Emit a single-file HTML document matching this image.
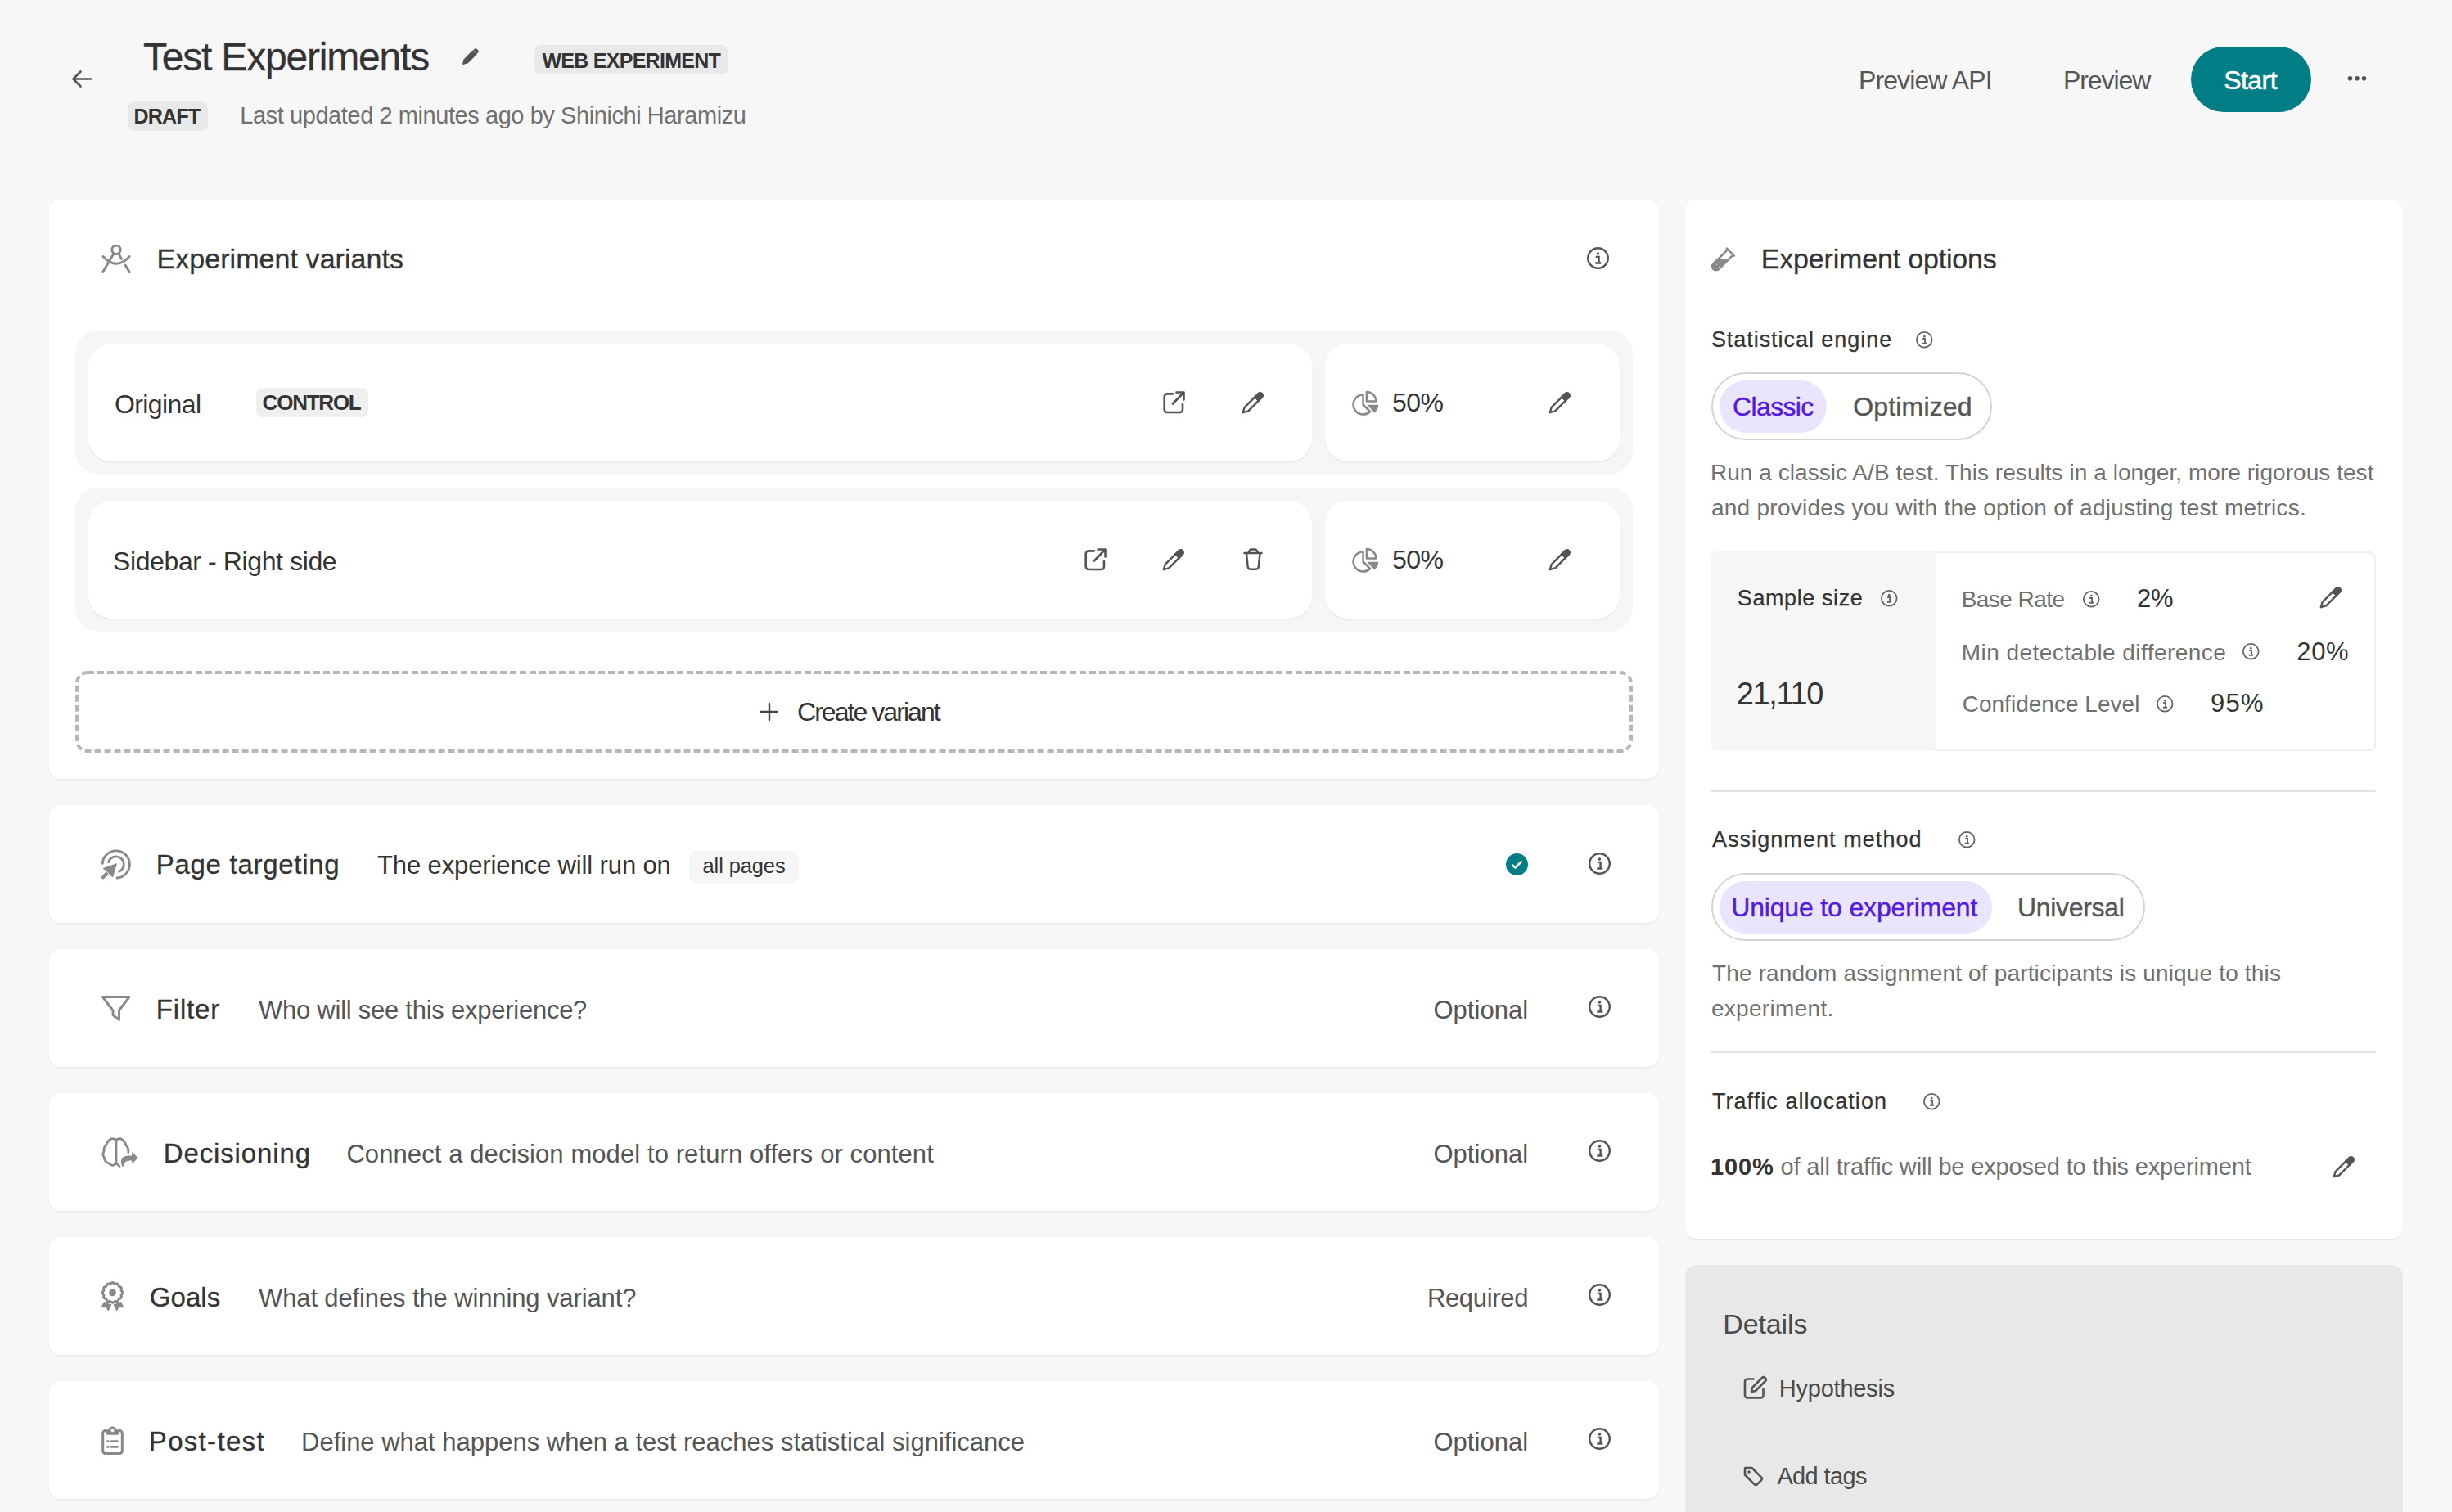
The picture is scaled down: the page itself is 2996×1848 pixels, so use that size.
<!DOCTYPE html>
<html><head><meta charset="utf-8"><title>Test Experiments</title>
<style>
html,body{margin:0;padding:0;background:#f7f7f7;}
body{width:2996px;height:1848px;overflow:hidden;background:#f7f7f7;position:relative;font-family:'Liberation Sans', sans-serif;}
.b{position:absolute;}
.t{position:absolute;white-space:nowrap;line-height:1;}
.i{position:absolute;overflow:visible;}
</style></head><body>
<div class="b" style="left:60px;top:244px;width:1967px;height:708px;background:#fff;border-radius:14px;box-shadow:0 1px 0 rgba(0,0,0,0.025), 0 2px 2px rgba(0,0,0,0.035);"></div>
<div class="b" style="left:92px;top:404px;width:1903px;height:176px;background:#f6f6f6;border-radius:28px;"></div>
<div class="b" style="left:108px;top:420px;width:1495px;height:144px;background:#fff;border-radius:28px;box-shadow:0 1.5px 2px rgba(0,0,0,0.05);"></div>
<div class="b" style="left:1619px;top:420px;width:360px;height:144px;background:#fff;border-radius:28px;box-shadow:0 1.5px 2px rgba(0,0,0,0.05);"></div>
<div class="b" style="left:92px;top:596px;width:1903px;height:176px;background:#f6f6f6;border-radius:28px;"></div>
<div class="b" style="left:108px;top:612px;width:1495px;height:144px;background:#fff;border-radius:28px;box-shadow:0 1.5px 2px rgba(0,0,0,0.05);"></div>
<div class="b" style="left:1619px;top:612px;width:360px;height:144px;background:#fff;border-radius:28px;box-shadow:0 1.5px 2px rgba(0,0,0,0.05);"></div>
<div class="b" style="left:313px;top:474px;width:137px;height:36px;background:#efefef;border-radius:8px;"></div>
<div class="b" style="left:60px;top:984px;width:1967px;height:144px;background:#fff;border-radius:14px;box-shadow:0 1px 0 rgba(0,0,0,0.025), 0 2px 2px rgba(0,0,0,0.035);"></div>
<div class="b" style="left:60px;top:1160px;width:1967px;height:144px;background:#fff;border-radius:14px;box-shadow:0 1px 0 rgba(0,0,0,0.025), 0 2px 2px rgba(0,0,0,0.035);"></div>
<div class="b" style="left:60px;top:1336px;width:1967px;height:144px;background:#fff;border-radius:14px;box-shadow:0 1px 0 rgba(0,0,0,0.025), 0 2px 2px rgba(0,0,0,0.035);"></div>
<div class="b" style="left:60px;top:1512px;width:1967px;height:144px;background:#fff;border-radius:14px;box-shadow:0 1px 0 rgba(0,0,0,0.025), 0 2px 2px rgba(0,0,0,0.035);"></div>
<div class="b" style="left:60px;top:1688px;width:1967px;height:144px;background:#fff;border-radius:14px;box-shadow:0 1px 0 rgba(0,0,0,0.025), 0 2px 2px rgba(0,0,0,0.035);"></div>
<div class="b" style="left:842px;top:1039px;width:134px;height:41px;background:#f6f6f6;border-radius:10px;box-shadow:0 1px 1px rgba(0,0,0,0.03);"></div>
<div class="b" style="left:653px;top:55px;width:237px;height:36px;background:#e9e9e9;border-radius:8px;"></div>
<div class="b" style="left:156px;top:124px;width:98px;height:36px;background:#e9e9e9;border-radius:8px;"></div>
<div class="b" style="left:2677px;top:57px;width:147px;height:80px;background:#007d85;border-radius:40px;"></div>
<div class="b" style="left:2059px;top:244px;width:877px;height:1270px;background:#fff;border-radius:14px;box-shadow:0 1px 0 rgba(0,0,0,0.025), 0 2px 2px rgba(0,0,0,0.035);"></div>
<div class="b" style="left:2091px;top:455px;width:343px;height:83px;background:#fff;border-radius:42px;border:2px solid #d4d4d4;box-sizing:border-box;"></div>
<div class="b" style="left:2101px;top:465px;width:131px;height:64px;background:#e8e5fd;border-radius:32px;"></div>
<div class="b" style="left:2091px;top:674px;width:812px;height:244px;background:#fff;border-radius:8px;border:2px solid #efefef;box-sizing:border-box;"></div>
<div class="b" style="left:2091px;top:674px;width:275px;height:244px;background:#f6f6f6;border-radius:7px;border-top-right-radius:0;border-bottom-right-radius:0;"></div>
<div class="b" style="left:2091px;top:966px;width:812px;height:2px;background:#e3e3e3;border-radius:0px;"></div>
<div class="b" style="left:2091px;top:1067px;width:530px;height:83px;background:#fff;border-radius:42px;border:2px solid #d4d4d4;box-sizing:border-box;"></div>
<div class="b" style="left:2101px;top:1076.5px;width:333px;height:64px;background:#e8e5fd;border-radius:32px;"></div>
<div class="b" style="left:2091px;top:1284.5px;width:812px;height:2px;background:#e3e3e3;border-radius:0px;"></div>
<div class="b" style="left:2059px;top:1546px;width:877px;height:400px;background:#e8e8e8;border-radius:14px;"></div>
<svg class="i" style="left:86px;top:84px" width="28" height="26" viewBox="0 0 28 26"><path d="M25 12.5 H4.5 M12.5 3.5 L3.5 12.5 L12.5 21.5" fill="none" stroke="#535457" stroke-width="2.7" stroke-linecap="round" stroke-linejoin="round"/></svg>
<svg class="i" style="left:563px;top:57px" width="24" height="24" viewBox="0 0 24 24"><path d="M2.5 21.5 L4 15.5 L15 4.5 L19.5 9 L8.5 20 Z" fill="#535457" stroke="#535457" stroke-width="1" stroke-linejoin="round"/><path d="M16.5 3 a2.4 2.4 0 0 1 3.4 0 l1.1 1.1 a2.4 2.4 0 0 1 0 3.4 l-1 1 l-4.5 -4.5 z" fill="#535457"/></svg>
<svg class="i" style="left:2866px;top:89px" width="30" height="14" viewBox="0 0 30 14"><circle cx="5.5" cy="6.8" r="2.8" fill="#535457"/><circle cx="14" cy="6.8" r="2.8" fill="#535457"/><circle cx="22.5" cy="6.8" r="2.8" fill="#535457"/></svg>
<svg class="i" style="left:110px;top:280px" width="60" height="60" viewBox="0 0 60 60"><g fill="none" stroke="#88898c" stroke-width="2.9" stroke-linecap="round"><circle cx="32" cy="25.3" r="5.2"/><path d="M29 30 L15.6 52.5 M35 30 L38.6 36.6 M43 44 L48.4 52.8"/><path d="M16 33.5 Q32 51 48.2 33.5"/></g></svg>
<svg class="i" style="left:1938.5px;top:301.5px" width="27" height="27" viewBox="0 0 27 27"><circle cx="13.5" cy="13.5" r="12.285" fill="none" stroke="#535457" stroke-width="2.4299999999999997"/><circle cx="13.5" cy="8.1" r="1.7550000000000001" fill="#535457"/><path d="M10.8 11.88 H14.580000000000002 V19.439999999999998 M10.26 19.439999999999998 H17.28" fill="none" stroke="#535457" stroke-width="2.4299999999999997"/></svg>
<svg class="i" style="left:1881px;top:455.0px" width="60" height="98.0" viewBox="0 0 60 98.0"><g transform="translate(12,50.0) rotate(-45) scale(1.0)"><path d="M1.2 0 L7 -3.2 H25 V3.2 H7 Z" fill="none" stroke="#535457" stroke-width="2.4" stroke-linejoin="round"/><path d="M24 -4.4 H30.6 a4.4 4.4 0 0 1 0 8.8 H24 Z" fill="#535457"/></g></svg>
<svg class="i" style="left:1640px;top:465px" width="50" height="50" viewBox="0 0 50 50"><path d="M25.5 17.5 V29.5 L34 38 A12 12 0 1 1 25.5 17.5 Z" fill="none" stroke="#88898c" stroke-width="2.5" stroke-linejoin="round"/><path d="M29.9 14.1 V25.5 H41.3 A11.4 11.4 0 0 0 29.9 14.1 Z" fill="none" stroke="#88898c" stroke-width="2.5" stroke-linejoin="round"/><path d="M30.2 29.8 H44.2 A14 14 0 0 1 39.5 39.6 Z" fill="#88898c"/></svg>
<svg class="i" style="left:1881px;top:647.0px" width="60" height="98.0" viewBox="0 0 60 98.0"><g transform="translate(12,50.0) rotate(-45) scale(1.0)"><path d="M1.2 0 L7 -3.2 H25 V3.2 H7 Z" fill="none" stroke="#535457" stroke-width="2.4" stroke-linejoin="round"/><path d="M24 -4.4 H30.6 a4.4 4.4 0 0 1 0 8.8 H24 Z" fill="#535457"/></g></svg>
<svg class="i" style="left:1640px;top:657px" width="50" height="50" viewBox="0 0 50 50"><path d="M25.5 17.5 V29.5 L34 38 A12 12 0 1 1 25.5 17.5 Z" fill="none" stroke="#88898c" stroke-width="2.5" stroke-linejoin="round"/><path d="M29.9 14.1 V25.5 H41.3 A11.4 11.4 0 0 0 29.9 14.1 Z" fill="none" stroke="#88898c" stroke-width="2.5" stroke-linejoin="round"/><path d="M30.2 29.8 H44.2 A14 14 0 0 1 39.5 39.6 Z" fill="#88898c"/></svg>
<svg class="i" style="left:1419px;top:476px" width="32" height="32" viewBox="0 0 32 32"><path d="M13.9 5.4 H7.2 a3.5 3.5 0 0 0 -3.5 3.5 V24.5 a3.5 3.5 0 0 0 3.5 3.5 H22.5 a3.5 3.5 0 0 0 3.5 -3.5 V18" fill="none" stroke="#535457" stroke-width="2.6" stroke-linecap="round"/><path d="M18.5 3.5 H27.5 V12.5 M27 4 L13.9 17.5" fill="none" stroke="#535457" stroke-width="2.6" stroke-linecap="round" stroke-linejoin="round"/></svg>
<svg class="i" style="left:1505.6px;top:454.8px" width="60" height="98.0" viewBox="0 0 60 98.0"><g transform="translate(12,50.0) rotate(-45) scale(1.0)"><path d="M1.2 0 L7 -3.2 H25 V3.2 H7 Z" fill="none" stroke="#535457" stroke-width="2.4" stroke-linejoin="round"/><path d="M24 -4.4 H30.6 a4.4 4.4 0 0 1 0 8.8 H24 Z" fill="#535457"/></g></svg>
<svg class="i" style="left:1323px;top:668px" width="32" height="32" viewBox="0 0 32 32"><path d="M13.9 5.4 H7.2 a3.5 3.5 0 0 0 -3.5 3.5 V24.5 a3.5 3.5 0 0 0 3.5 3.5 H22.5 a3.5 3.5 0 0 0 3.5 -3.5 V18" fill="none" stroke="#535457" stroke-width="2.6" stroke-linecap="round"/><path d="M18.5 3.5 H27.5 V12.5 M27 4 L13.9 17.5" fill="none" stroke="#535457" stroke-width="2.6" stroke-linecap="round" stroke-linejoin="round"/></svg>
<svg class="i" style="left:1409px;top:647.0px" width="60" height="98.0" viewBox="0 0 60 98.0"><g transform="translate(12,50.0) rotate(-45) scale(1.0)"><path d="M1.2 0 L7 -3.2 H25 V3.2 H7 Z" fill="none" stroke="#535457" stroke-width="2.4" stroke-linejoin="round"/><path d="M24 -4.4 H30.6 a4.4 4.4 0 0 1 0 8.8 H24 Z" fill="#535457"/></g></svg>
<svg class="i" style="left:1515px;top:661px" width="32" height="38" viewBox="0 0 32 38"><path d="M5.5 14.9 H26.5" stroke="#535457" stroke-width="2.5" stroke-linecap="round"/><path d="M10.5 14.6 L12.2 11.4 a1.5 1.5 0 0 1 1.3 -0.8 H19 a1.5 1.5 0 0 1 1.3 0.8 L22 14.6" fill="none" stroke="#535457" stroke-width="2.5" stroke-linejoin="round"/><path d="M8 15.5 L9.6 31.5 a3.5 3.5 0 0 0 3.5 3.2 H19.3 a3.5 3.5 0 0 0 3.5 -3.2 L24.5 15.5" fill="none" stroke="#535457" stroke-width="2.5" stroke-linejoin="round"/></svg>
<svg class="i" style="left:92px;top:820px" width="1903" height="100" viewBox="0 0 1903 100"><rect x="2" y="2" width="1899" height="96" rx="13" fill="none" stroke="#b7b7b7" stroke-width="4" stroke-dasharray="8 4"/></svg>
<svg class="i" style="left:928px;top:858px" width="24" height="24" viewBox="0 0 24 24"><path d="M12 2 V22 M2 12 H22" stroke="#444" stroke-width="2.4" stroke-linecap="round"/></svg>
<svg class="i" style="left:110px;top:1025px" width="70" height="65" viewBox="0 0 70 65"><g fill="none" stroke="#88898c" stroke-width="2.8"><path d="M15.2 31.4 A16.6 16.6 0 1 1 31.8 48"/><path d="M22.35 29.7 A9.6 9.6 0 1 1 34.3 40.7"/></g><path d="M16 47.2 L24.5 38.5" stroke="#88898c" stroke-width="4.2" stroke-linecap="round"/><path d="M32.4 30.8 L16.3 36.4 L21.5 40.2 L27.5 46.9 Z" fill="#88898c" stroke="#fff" stroke-width="2.2" stroke-linejoin="round" paint-order="stroke"/><path d="M32.4 30.8 L16.3 36.4 L21.5 40.2 L27.5 46.9 Z" fill="#88898c" stroke="#88898c" stroke-width="1" stroke-linejoin="round"/></svg>
<svg class="i" style="left:1839.5px;top:1042.5px" width="27" height="27" viewBox="0 0 27 27"><circle cx="13.5" cy="13.5" r="13.5" fill="#007d85"/><path d="M7.5 14 L11.5 17.5 L19.5 9.5" fill="none" stroke="#fff" stroke-width="2.6"/></svg>
<svg class="i" style="left:1941.0px;top:1041.5px" width="27" height="27" viewBox="0 0 27 27"><circle cx="13.5" cy="13.5" r="12.285" fill="none" stroke="#535457" stroke-width="2.4299999999999997"/><circle cx="13.5" cy="8.1" r="1.7550000000000001" fill="#535457"/><path d="M10.8 11.88 H14.580000000000002 V19.439999999999998 M10.26 19.439999999999998 H17.28" fill="none" stroke="#535457" stroke-width="2.4299999999999997"/></svg>
<svg class="i" style="left:1941.0px;top:1217.2px" width="27" height="27" viewBox="0 0 27 27"><circle cx="13.5" cy="13.5" r="12.285" fill="none" stroke="#535457" stroke-width="2.4299999999999997"/><circle cx="13.5" cy="8.1" r="1.7550000000000001" fill="#535457"/><path d="M10.8 11.88 H14.580000000000002 V19.439999999999998 M10.26 19.439999999999998 H17.28" fill="none" stroke="#535457" stroke-width="2.4299999999999997"/></svg>
<svg class="i" style="left:1941.0px;top:1393.2px" width="27" height="27" viewBox="0 0 27 27"><circle cx="13.5" cy="13.5" r="12.285" fill="none" stroke="#535457" stroke-width="2.4299999999999997"/><circle cx="13.5" cy="8.1" r="1.7550000000000001" fill="#535457"/><path d="M10.8 11.88 H14.580000000000002 V19.439999999999998 M10.26 19.439999999999998 H17.28" fill="none" stroke="#535457" stroke-width="2.4299999999999997"/></svg>
<svg class="i" style="left:1941.0px;top:1569.2px" width="27" height="27" viewBox="0 0 27 27"><circle cx="13.5" cy="13.5" r="12.285" fill="none" stroke="#535457" stroke-width="2.4299999999999997"/><circle cx="13.5" cy="8.1" r="1.7550000000000001" fill="#535457"/><path d="M10.8 11.88 H14.580000000000002 V19.439999999999998 M10.26 19.439999999999998 H17.28" fill="none" stroke="#535457" stroke-width="2.4299999999999997"/></svg>
<svg class="i" style="left:1941.0px;top:1745.2px" width="27" height="27" viewBox="0 0 27 27"><circle cx="13.5" cy="13.5" r="12.285" fill="none" stroke="#535457" stroke-width="2.4299999999999997"/><circle cx="13.5" cy="8.1" r="1.7550000000000001" fill="#535457"/><path d="M10.8 11.88 H14.580000000000002 V19.439999999999998 M10.26 19.439999999999998 H17.28" fill="none" stroke="#535457" stroke-width="2.4299999999999997"/></svg>
<svg class="i" style="left:110px;top:1200px" width="60" height="65" viewBox="0 0 60 65"><path d="M15.5 18.5 H48 L35.5 35 V46.5 L28 40.5 V35 Z" fill="none" stroke="#88898c" stroke-width="2.9" stroke-linejoin="round"/></svg>
<svg class="i" style="left:110px;top:1375px" width="70" height="65" viewBox="0 0 70 65"><g fill="none" stroke="#88898c" stroke-width="2.8" stroke-linejoin="round" stroke-linecap="round"><path d="M32 18.5 L29.5 16.8 L26 16.8 L23.5 18.5 L21 21.5 L20 24 L17.8 26.5 L17 29.5 L17.2 31.5 L16.2 34 L15.8 36.5 L17.2 39.5 L18 43 L20 45.5 L22.5 46.5 L25 48.5 L27.5 49.5 L30 48.5 L32 46.5"/><path d="M32 18.5 L34.5 16.8 L38 16.8 L40.5 19 L43 22 L44 25 L46 27.5 L46.8 30 L46.8 33.5"/><path d="M32 18 V46.5 L36 50.5"/></g><path d="M39.5 50.8 C37.5 47 37.2 42.5 40 39.8 C42 38 45 37.4 51.2 37.4 V32.7 L58.7 40.2 L51.2 47.6 V43.4 C47 43.4 44 43.8 42.5 46 C41.8 47.2 41.8 49 41.8 50.5 Z" fill="#88898c"/></svg>
<svg class="i" style="left:110px;top:1550px" width="60" height="65" viewBox="0 0 60 65"><path d="M27.50 17.50 L29.03 18.30 L30.35 19.27 L31.98 19.09 L33.70 19.16 L34.62 20.62 L35.28 22.12 L36.78 22.78 L38.24 23.70 L38.31 25.42 L38.13 27.05 L39.10 28.37 L39.90 29.90 L39.10 31.43 L38.13 32.75 L38.31 34.38 L38.24 36.10 L36.78 37.02 L35.28 37.68 L34.62 39.18 L33.70 40.64 L31.98 40.71 L30.35 40.53 L29.03 41.50 L27.50 42.30 L25.97 41.50 L24.65 40.53 L23.02 40.71 L21.30 40.64 L20.38 39.18 L19.72 37.68 L18.22 37.02 L16.76 36.10 L16.69 34.38 L16.87 32.75 L15.90 31.43 L15.10 29.90 L15.90 28.37 L16.87 27.05 L16.69 25.42 L16.76 23.70 L18.22 22.78 L19.72 22.12 L20.38 20.62 L21.30 19.16 L23.02 19.09 L24.65 19.27 L25.97 18.30 Z" fill="none" stroke="#88898c" stroke-width="3" stroke-linejoin="round"/><circle cx="27.5" cy="29.9" r="4.3" fill="#88898c"/><path d="M17.2 41.3 L14.3 47.8 L20 47.3 L22.3 52 L25.8 44.6 C22 44 19.5 43 17.2 41.3 Z M37.8 41.3 L40.7 47.8 L35 47.3 L32.7 52 L29.2 44.6 C33 44 35.5 43 37.8 41.3 Z" fill="#88898c" stroke="#88898c" stroke-width="1" stroke-linejoin="round"/></svg>
<svg class="i" style="left:110px;top:1728px" width="60" height="65" viewBox="0 0 60 65"><path d="M19.8 20.6 H18.7 a3 3 0 0 0 -3 3 V45.5 a3 3 0 0 0 3 3 H36.3 a3 3 0 0 0 3 -3 V23.6 a3 3 0 0 0 -3 -3 H35.2" fill="none" stroke="#88898c" stroke-width="3"/><path d="M19.8 19.2 H22.4 A5.4 5.4 0 0 1 32.6 19.2 H35.2 V24.3 a1.5 1.5 0 0 1 -1.5 1.5 H21.3 a1.5 1.5 0 0 1 -1.5 -1.5 Z M27.5 18.2 a2 2 0 1 0 0.01 0 Z" fill="#88898c" fill-rule="evenodd"/><circle cx="21.9" cy="33.5" r="1.6" fill="#88898c"/><circle cx="21.9" cy="40.4" r="1.6" fill="#88898c"/><path d="M26 33.5 H33.5 M26 40.4 H33.5" stroke="#88898c" stroke-width="2.6" stroke-linecap="round"/></svg>
<svg class="i" style="left:2080px;top:290px" width="55" height="55" viewBox="0 0 55 55"><path d="M30.18 15.82 L13.55 32.35 A4.6 4.6 0 0 0 20.05 38.85 L36.68 22.32" fill="none" stroke="#88898c" stroke-width="2.6"/><path d="M29.82 13.62 L38.88 22.68" stroke="#88898c" stroke-width="2.6" stroke-linecap="round"/><path d="M16.95 27.1 H33.64 L20.97 39.77 A5.9 5.9 0 0 1 12.63 31.43 Z" fill="#88898c"/><g fill="#fff" opacity="0.6"><circle cx="20.5" cy="31.5" r="0.7"/><circle cx="24.5" cy="31.5" r="0.7"/><circle cx="17.5" cy="33.5" r="0.7"/><circle cx="20.5" cy="36.4" r="0.7"/></g></svg>
<svg class="i" style="left:2341.25px;top:404.55px" width="20.5" height="20.5" viewBox="0 0 20.5 20.5"><circle cx="10.25" cy="10.25" r="9.35" fill="none" stroke="#646567" stroke-width="1.8"/><circle cx="10.25" cy="6.1499999999999995" r="1.3325" fill="#646567"/><path d="M8.200000000000001 9.02 H11.07 V14.76 M7.79 14.76 H13.120000000000001" fill="none" stroke="#646567" stroke-width="1.845"/></svg>
<svg class="i" style="left:2297.55px;top:720.75px" width="20.5" height="20.5" viewBox="0 0 20.5 20.5"><circle cx="10.25" cy="10.25" r="9.35" fill="none" stroke="#646567" stroke-width="1.8"/><circle cx="10.25" cy="6.1499999999999995" r="1.3325" fill="#646567"/><path d="M8.200000000000001 9.02 H11.07 V14.76 M7.79 14.76 H13.120000000000001" fill="none" stroke="#646567" stroke-width="1.845"/></svg>
<svg class="i" style="left:2545.05px;top:721.75px" width="20.5" height="20.5" viewBox="0 0 20.5 20.5"><circle cx="10.25" cy="10.25" r="9.35" fill="none" stroke="#646567" stroke-width="1.8"/><circle cx="10.25" cy="6.1499999999999995" r="1.3325" fill="#646567"/><path d="M8.200000000000001 9.02 H11.07 V14.76 M7.79 14.76 H13.120000000000001" fill="none" stroke="#646567" stroke-width="1.845"/></svg>
<svg class="i" style="left:2740.25px;top:786.25px" width="20.5" height="20.5" viewBox="0 0 20.5 20.5"><circle cx="10.25" cy="10.25" r="9.35" fill="none" stroke="#646567" stroke-width="1.8"/><circle cx="10.25" cy="6.1499999999999995" r="1.3325" fill="#646567"/><path d="M8.200000000000001 9.02 H11.07 V14.76 M7.79 14.76 H13.120000000000001" fill="none" stroke="#646567" stroke-width="1.845"/></svg>
<svg class="i" style="left:2635.25px;top:849.75px" width="20.5" height="20.5" viewBox="0 0 20.5 20.5"><circle cx="10.25" cy="10.25" r="9.35" fill="none" stroke="#646567" stroke-width="1.8"/><circle cx="10.25" cy="6.1499999999999995" r="1.3325" fill="#646567"/><path d="M8.200000000000001 9.02 H11.07 V14.76 M7.79 14.76 H13.120000000000001" fill="none" stroke="#646567" stroke-width="1.845"/></svg>
<svg class="i" style="left:2392.65px;top:1015.75px" width="20.5" height="20.5" viewBox="0 0 20.5 20.5"><circle cx="10.25" cy="10.25" r="9.35" fill="none" stroke="#646567" stroke-width="1.8"/><circle cx="10.25" cy="6.1499999999999995" r="1.3325" fill="#646567"/><path d="M8.200000000000001 9.02 H11.07 V14.76 M7.79 14.76 H13.120000000000001" fill="none" stroke="#646567" stroke-width="1.845"/></svg>
<svg class="i" style="left:2350.25px;top:1335.75px" width="20.5" height="20.5" viewBox="0 0 20.5 20.5"><circle cx="10.25" cy="10.25" r="9.35" fill="none" stroke="#646567" stroke-width="1.8"/><circle cx="10.25" cy="6.1499999999999995" r="1.3325" fill="#646567"/><path d="M8.200000000000001 9.02 H11.07 V14.76 M7.79 14.76 H13.120000000000001" fill="none" stroke="#646567" stroke-width="1.845"/></svg>
<svg class="i" style="left:2823px;top:692.5px" width="60" height="98.0" viewBox="0 0 60 98.0"><g transform="translate(12,50.0) rotate(-45) scale(1.0)"><path d="M1.2 0 L7 -3.2 H25 V3.2 H7 Z" fill="none" stroke="#535457" stroke-width="2.4" stroke-linejoin="round"/><path d="M24 -4.4 H30.6 a4.4 4.4 0 0 1 0 8.8 H24 Z" fill="#535457"/></g></svg>
<svg class="i" style="left:2839px;top:1389.0px" width="60" height="98.0" viewBox="0 0 60 98.0"><g transform="translate(12,50.0) rotate(-45) scale(1.0)"><path d="M1.2 0 L7 -3.2 H25 V3.2 H7 Z" fill="none" stroke="#535457" stroke-width="2.4" stroke-linejoin="round"/><path d="M24 -4.4 H30.6 a4.4 4.4 0 0 1 0 8.8 H24 Z" fill="#535457"/></g></svg>
<svg class="i" style="left:2129px;top:1681px" width="33" height="32" viewBox="0 0 33 32"><path d="M13.5 4.5 H6 a3 3 0 0 0 -3 3 V24.5 a3 3 0 0 0 3 3 H22.5 a3 3 0 0 0 3 -3 V17" fill="none" stroke="#535457" stroke-width="2.6" stroke-linecap="round"/><path d="M11 20 L12 15 L24 3 a2.5 2.5 0 0 1 3.5 0 l0.5 0.5 a2.5 2.5 0 0 1 0 3.5 L16 19 Z" fill="none" stroke="#535457" stroke-width="2.6" stroke-linejoin="round"/></svg>
<svg class="i" style="left:2129px;top:1791px" width="28" height="28" viewBox="0 0 28 28"><path d="M3 3.5 V11.5 L14.8 23.3 a2 2 0 0 0 3 0 L23.3 17.8 a2 2 0 0 0 0 -3 L11.5 3 H3.5 Z" fill="none" stroke="#535457" stroke-width="2.6" stroke-linejoin="round"/><circle cx="8" cy="8" r="1.8" fill="#535457"/></svg>
<div class="t" style="left:174.9px;top:46.3px;font-size:48px;font-weight:normal;color:#333333;letter-spacing:-1.19px;-webkit-text-stroke:0.3px #333333;">Test Experiments</div>
<div class="t" style="left:662.4px;top:61.5px;font-size:25px;font-weight:bold;color:#333333;letter-spacing:-0.72px;">WEB EXPERIMENT</div>
<div class="t" style="left:163.5px;top:130.3px;font-size:25px;font-weight:bold;color:#333333;letter-spacing:-0.75px;">DRAFT</div>
<div class="t" style="left:293.3px;top:127.3px;font-size:29px;font-weight:normal;color:#707070;letter-spacing:-0.43px;">Last updated 2 minutes ago by Shinichi Haramizu</div>
<div class="t" style="left:2271.0px;top:82.4px;font-size:32px;font-weight:normal;color:#555555;letter-spacing:-0.90px;">Preview API</div>
<div class="t" style="left:2521.0px;top:82.4px;font-size:32px;font-weight:normal;color:#555555;letter-spacing:-1.07px;">Preview</div>
<div class="t" style="left:2717.2px;top:81.9px;font-size:32px;font-weight:normal;color:#ffffff;letter-spacing:-0.55px;-webkit-text-stroke:0.6px #ffffff;">Start</div>
<div class="t" style="left:191.5px;top:299.3px;font-size:34px;font-weight:normal;color:#333333;letter-spacing:0.06px;-webkit-text-stroke:0.3px #333333;">Experiment variants</div>
<div class="t" style="left:140.0px;top:477.5px;font-size:32px;font-weight:normal;color:#333333;letter-spacing:-0.60px;">Original</div>
<div class="t" style="left:320.6px;top:479.2px;font-size:26px;font-weight:bold;color:#333333;letter-spacing:-1.23px;">CONTROL</div>
<div class="t" style="left:1701.0px;top:476.3px;font-size:32px;font-weight:normal;color:#333333;letter-spacing:-0.50px;">50%</div>
<div class="t" style="left:138.0px;top:669.5px;font-size:32px;font-weight:normal;color:#333333;letter-spacing:-0.39px;">Sidebar - Right side</div>
<div class="t" style="left:1701.0px;top:668.3px;font-size:32px;font-weight:normal;color:#333333;letter-spacing:-0.50px;">50%</div>
<div class="t" style="left:974.0px;top:854.0px;font-size:32px;font-weight:normal;color:#333333;letter-spacing:-1.95px;">Create variant</div>
<div class="t" style="left:190.7px;top:1039.5px;font-size:33px;font-weight:normal;color:#333333;letter-spacing:0.72px;-webkit-text-stroke:0.3px #333333;">Page targeting</div>
<div class="t" style="left:461.0px;top:1041.5px;font-size:31px;font-weight:normal;color:#333333;letter-spacing:-0.12px;">The experience will run on</div>
<div class="t" style="left:190.7px;top:1216.8px;font-size:33px;font-weight:normal;color:#333333;letter-spacing:0.86px;-webkit-text-stroke:0.3px #333333;">Filter</div>
<div class="t" style="left:316.0px;top:1218.8px;font-size:31px;font-weight:normal;color:#555555;letter-spacing:-0.25px;">Who will see this experience?</div>
<div class="t" style="left:1751.5px;top:1218.8px;font-size:31px;font-weight:normal;color:#555555;letter-spacing:0.01px;">Optional</div>
<div class="t" style="left:199.7px;top:1392.8px;font-size:33px;font-weight:normal;color:#333333;letter-spacing:0.88px;-webkit-text-stroke:0.3px #333333;">Decisioning</div>
<div class="t" style="left:423.4px;top:1394.8px;font-size:31px;font-weight:normal;color:#555555;letter-spacing:0.09px;">Connect a decision model to return offers or content</div>
<div class="t" style="left:1751.5px;top:1394.8px;font-size:31px;font-weight:normal;color:#555555;letter-spacing:0.01px;">Optional</div>
<div class="t" style="left:182.8px;top:1568.8px;font-size:33px;font-weight:normal;color:#333333;letter-spacing:0.05px;-webkit-text-stroke:0.3px #333333;">Goals</div>
<div class="t" style="left:316.0px;top:1570.8px;font-size:31px;font-weight:normal;color:#555555;letter-spacing:-0.12px;">What defines the winning variant?</div>
<div class="t" style="left:1743.9px;top:1570.8px;font-size:31px;font-weight:normal;color:#555555;letter-spacing:-0.33px;">Required</div>
<div class="t" style="left:181.8px;top:1744.8px;font-size:33px;font-weight:normal;color:#333333;letter-spacing:1.32px;-webkit-text-stroke:0.3px #333333;">Post-test</div>
<div class="t" style="left:368.0px;top:1746.8px;font-size:31px;font-weight:normal;color:#555555;letter-spacing:0.00px;">Define what happens when a test reaches statistical significance</div>
<div class="t" style="left:1751.5px;top:1746.8px;font-size:31px;font-weight:normal;color:#555555;letter-spacing:0.01px;">Optional</div>
<div class="t" style="left:858.5px;top:1046.0px;font-size:25.5px;font-weight:normal;color:#333333;letter-spacing:-0.11px;">all pages</div>
<div class="t" style="left:2151.8px;top:299.2px;font-size:34px;font-weight:normal;color:#333333;letter-spacing:-0.18px;-webkit-text-stroke:0.3px #333333;">Experiment options</div>
<div class="t" style="left:2090.9px;top:401.8px;font-size:27px;font-weight:normal;color:#333333;letter-spacing:0.95px;-webkit-text-stroke:0.25px #333333;">Statistical engine</div>
<div class="t" style="left:2117.0px;top:481.2px;font-size:32px;font-weight:normal;color:#5419e0;letter-spacing:-0.63px;-webkit-text-stroke:0.4px #5419e0;">Classic</div>
<div class="t" style="left:2264.3px;top:481.2px;font-size:32px;font-weight:normal;color:#555555;letter-spacing:0.16px;-webkit-text-stroke:0.4px #555555;">Optimized</div>
<div class="t" style="left:2089.9px;top:563.7px;font-size:28px;font-weight:normal;color:#707070;letter-spacing:0.05px;">Run a classic A/B test. This results in a longer, more rigorous test</div>
<div class="t" style="left:2090.9px;top:606.6px;font-size:28px;font-weight:normal;color:#707070;letter-spacing:0.27px;">and provides you with the option of adjusting test metrics.</div>
<div class="t" style="left:2122.8px;top:718.4px;font-size:27px;font-weight:normal;color:#333333;letter-spacing:0.59px;-webkit-text-stroke:0.25px #333333;">Sample size</div>
<div class="t" style="left:2121.8px;top:828.5px;font-size:38px;font-weight:normal;color:#333333;letter-spacing:-1.36px;">21,110</div>
<div class="t" style="left:2396.7px;top:719.4px;font-size:28px;font-weight:normal;color:#707070;letter-spacing:-0.55px;">Base Rate</div>
<div class="t" style="left:2611.0px;top:716.4px;font-size:31px;font-weight:normal;color:#333333;letter-spacing:-0.20px;">2%</div>
<div class="t" style="left:2396.7px;top:783.7px;font-size:28px;font-weight:normal;color:#707070;letter-spacing:0.45px;">Min detectable difference</div>
<div class="t" style="left:2806.3px;top:780.7px;font-size:31px;font-weight:normal;color:#333333;letter-spacing:0.60px;">20%</div>
<div class="t" style="left:2397.7px;top:847.3px;font-size:28px;font-weight:normal;color:#707070;letter-spacing:0.02px;">Confidence Level</div>
<div class="t" style="left:2701.0px;top:844.3px;font-size:31px;font-weight:normal;color:#333333;letter-spacing:1.20px;">95%</div>
<div class="t" style="left:2091.9px;top:1012.8px;font-size:27px;font-weight:normal;color:#333333;letter-spacing:1.07px;-webkit-text-stroke:0.25px #333333;">Assignment method</div>
<div class="t" style="left:2115.2px;top:1093.0px;font-size:32px;font-weight:normal;color:#5419e0;letter-spacing:-0.16px;-webkit-text-stroke:0.4px #5419e0;">Unique to experiment</div>
<div class="t" style="left:2465.0px;top:1093.0px;font-size:32px;font-weight:normal;color:#555555;letter-spacing:-0.32px;-webkit-text-stroke:0.4px #555555;">Universal</div>
<div class="t" style="left:2091.9px;top:1175.6px;font-size:28px;font-weight:normal;color:#707070;letter-spacing:0.16px;">The random assignment of participants is unique to this</div>
<div class="t" style="left:2090.9px;top:1218.5px;font-size:28px;font-weight:normal;color:#707070;letter-spacing:0.31px;">experiment.</div>
<div class="t" style="left:2091.9px;top:1333.3px;font-size:27px;font-weight:normal;color:#333333;letter-spacing:1.06px;-webkit-text-stroke:0.25px #333333;">Traffic allocation</div>
<div class="t" style="left:2089.9px;top:1411.6px;font-size:29px;font-weight:bold;color:#333333;letter-spacing:0.93px;">100%</div>
<div class="t" style="left:2175.5px;top:1411.6px;font-size:29px;font-weight:normal;color:#707070;letter-spacing:-0.16px;">of all traffic will be exposed to this experiment</div>
<div class="t" style="left:2105.2px;top:1600.8px;font-size:34px;font-weight:normal;color:#4a4a4a;letter-spacing:-0.10px;">Details</div>
<div class="t" style="left:2173.7px;top:1682.6px;font-size:29px;font-weight:normal;color:#4a4a4a;letter-spacing:-0.20px;">Hypothesis</div>
<div class="t" style="left:2171.4px;top:1789.8px;font-size:29px;font-weight:normal;color:#4a4a4a;letter-spacing:-0.63px;">Add tags</div>
</body></html>
